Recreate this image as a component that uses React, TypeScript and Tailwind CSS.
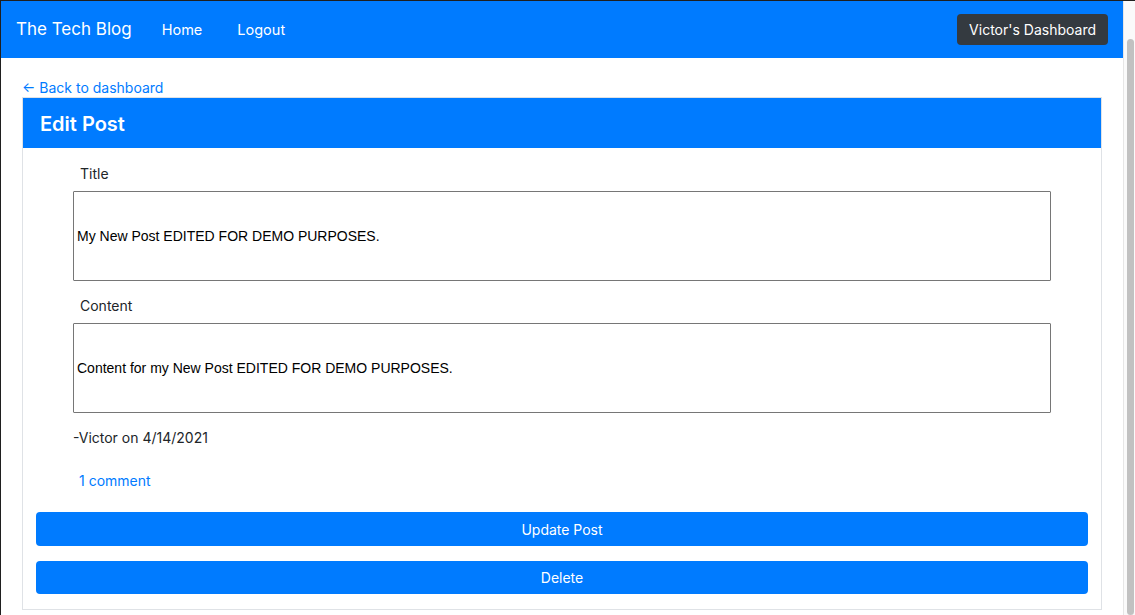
import React from "react";

export default function App() {
  return (
    <div className="w-[1135px] h-[615px] overflow-hidden flex border-t border-l border-[#1f1f1f] bg-white text-[#212529] font-['Inter','Noto_Sans',sans-serif]">
      <div className="flex-1 flex flex-col min-w-0">
        <nav className="h-[57px] bg-[#007bff] flex items-center pl-[15px] pr-[15px] text-white">
          <span className="text-[17px] leading-none">The Tech Blog</span>
          <a className="ml-[30px] text-[14.5px]">Home</a>
          <a className="ml-[35px] text-[14.5px]">Logout</a>
          <div className="flex-1" />
          <button className="h-[31px] px-[12px] rounded-[4px] bg-[#343a40] text-white text-[14px] leading-none">
            Victor's Dashboard
          </button>
        </nav>
        <div className="px-[21px]">
          <a className="block mt-[20px] h-[19px] text-[14px] leading-[19px] text-[#007bff]">← Back to dashboard</a>
          <div className="border border-[#dfe2e6] h-[513px] flex flex-col">
            <div className="h-[50px] bg-[#007bff] flex items-center pl-[17px] pt-[2px]">
              <h2 className="text-white text-[20px] font-semibold leading-none">Edit Post</h2>
            </div>
            <div className="px-[50px]">
              <label className="block mt-[16px] pl-[7px] text-[14px] leading-[20px]">Title</label>
              <div className="mt-[7px] h-[90px] border border-[#767676] rounded-[1px] flex items-center pl-[3px] pt-[1px] text-[14px] text-black font-['Liberation_Sans',Arial,sans-serif]">
                My New Post EDITED FOR DEMO PURPOSES.
              </div>
              <label className="block mt-[15px] pl-[7px] text-[14px] leading-[20px]">Content</label>
              <div className="mt-[7px] h-[90px] border border-[#767676] rounded-[1px] flex items-center pl-[3px] pt-[1px] text-[14px] text-black font-['Liberation_Sans',Arial,sans-serif]">
                Content for my New Post EDITED FOR DEMO PURPOSES.
              </div>
              <p className="mt-[14px] text-[14px] leading-[22px]">-Victor on 4/14/2021</p>
              <a className="block mt-[21px] pl-[6px] text-[14px] leading-[22px] text-[#007bff]">1 comment</a>
            </div>
            <div className="px-[13px] mt-[20px] flex flex-col gap-[15px]">
              <button className="h-[34px] w-full rounded-[4px] bg-[#007bff] text-white text-[14px]">Update Post</button>
              <button className="h-[33px] w-full rounded-[4px] bg-[#007bff] text-white text-[14px]">Delete</button>
            </div>
          </div>
        </div>
      </div>
      <div className="w-[12px] bg-[#fafafa] border-l border-[#e6e6e6] flex flex-col pt-[38px]">
        <div className="flex-1 ml-[3px] w-[7px] rounded-full bg-[#c1c1c1]" />
      </div>
    </div>
  );
}
